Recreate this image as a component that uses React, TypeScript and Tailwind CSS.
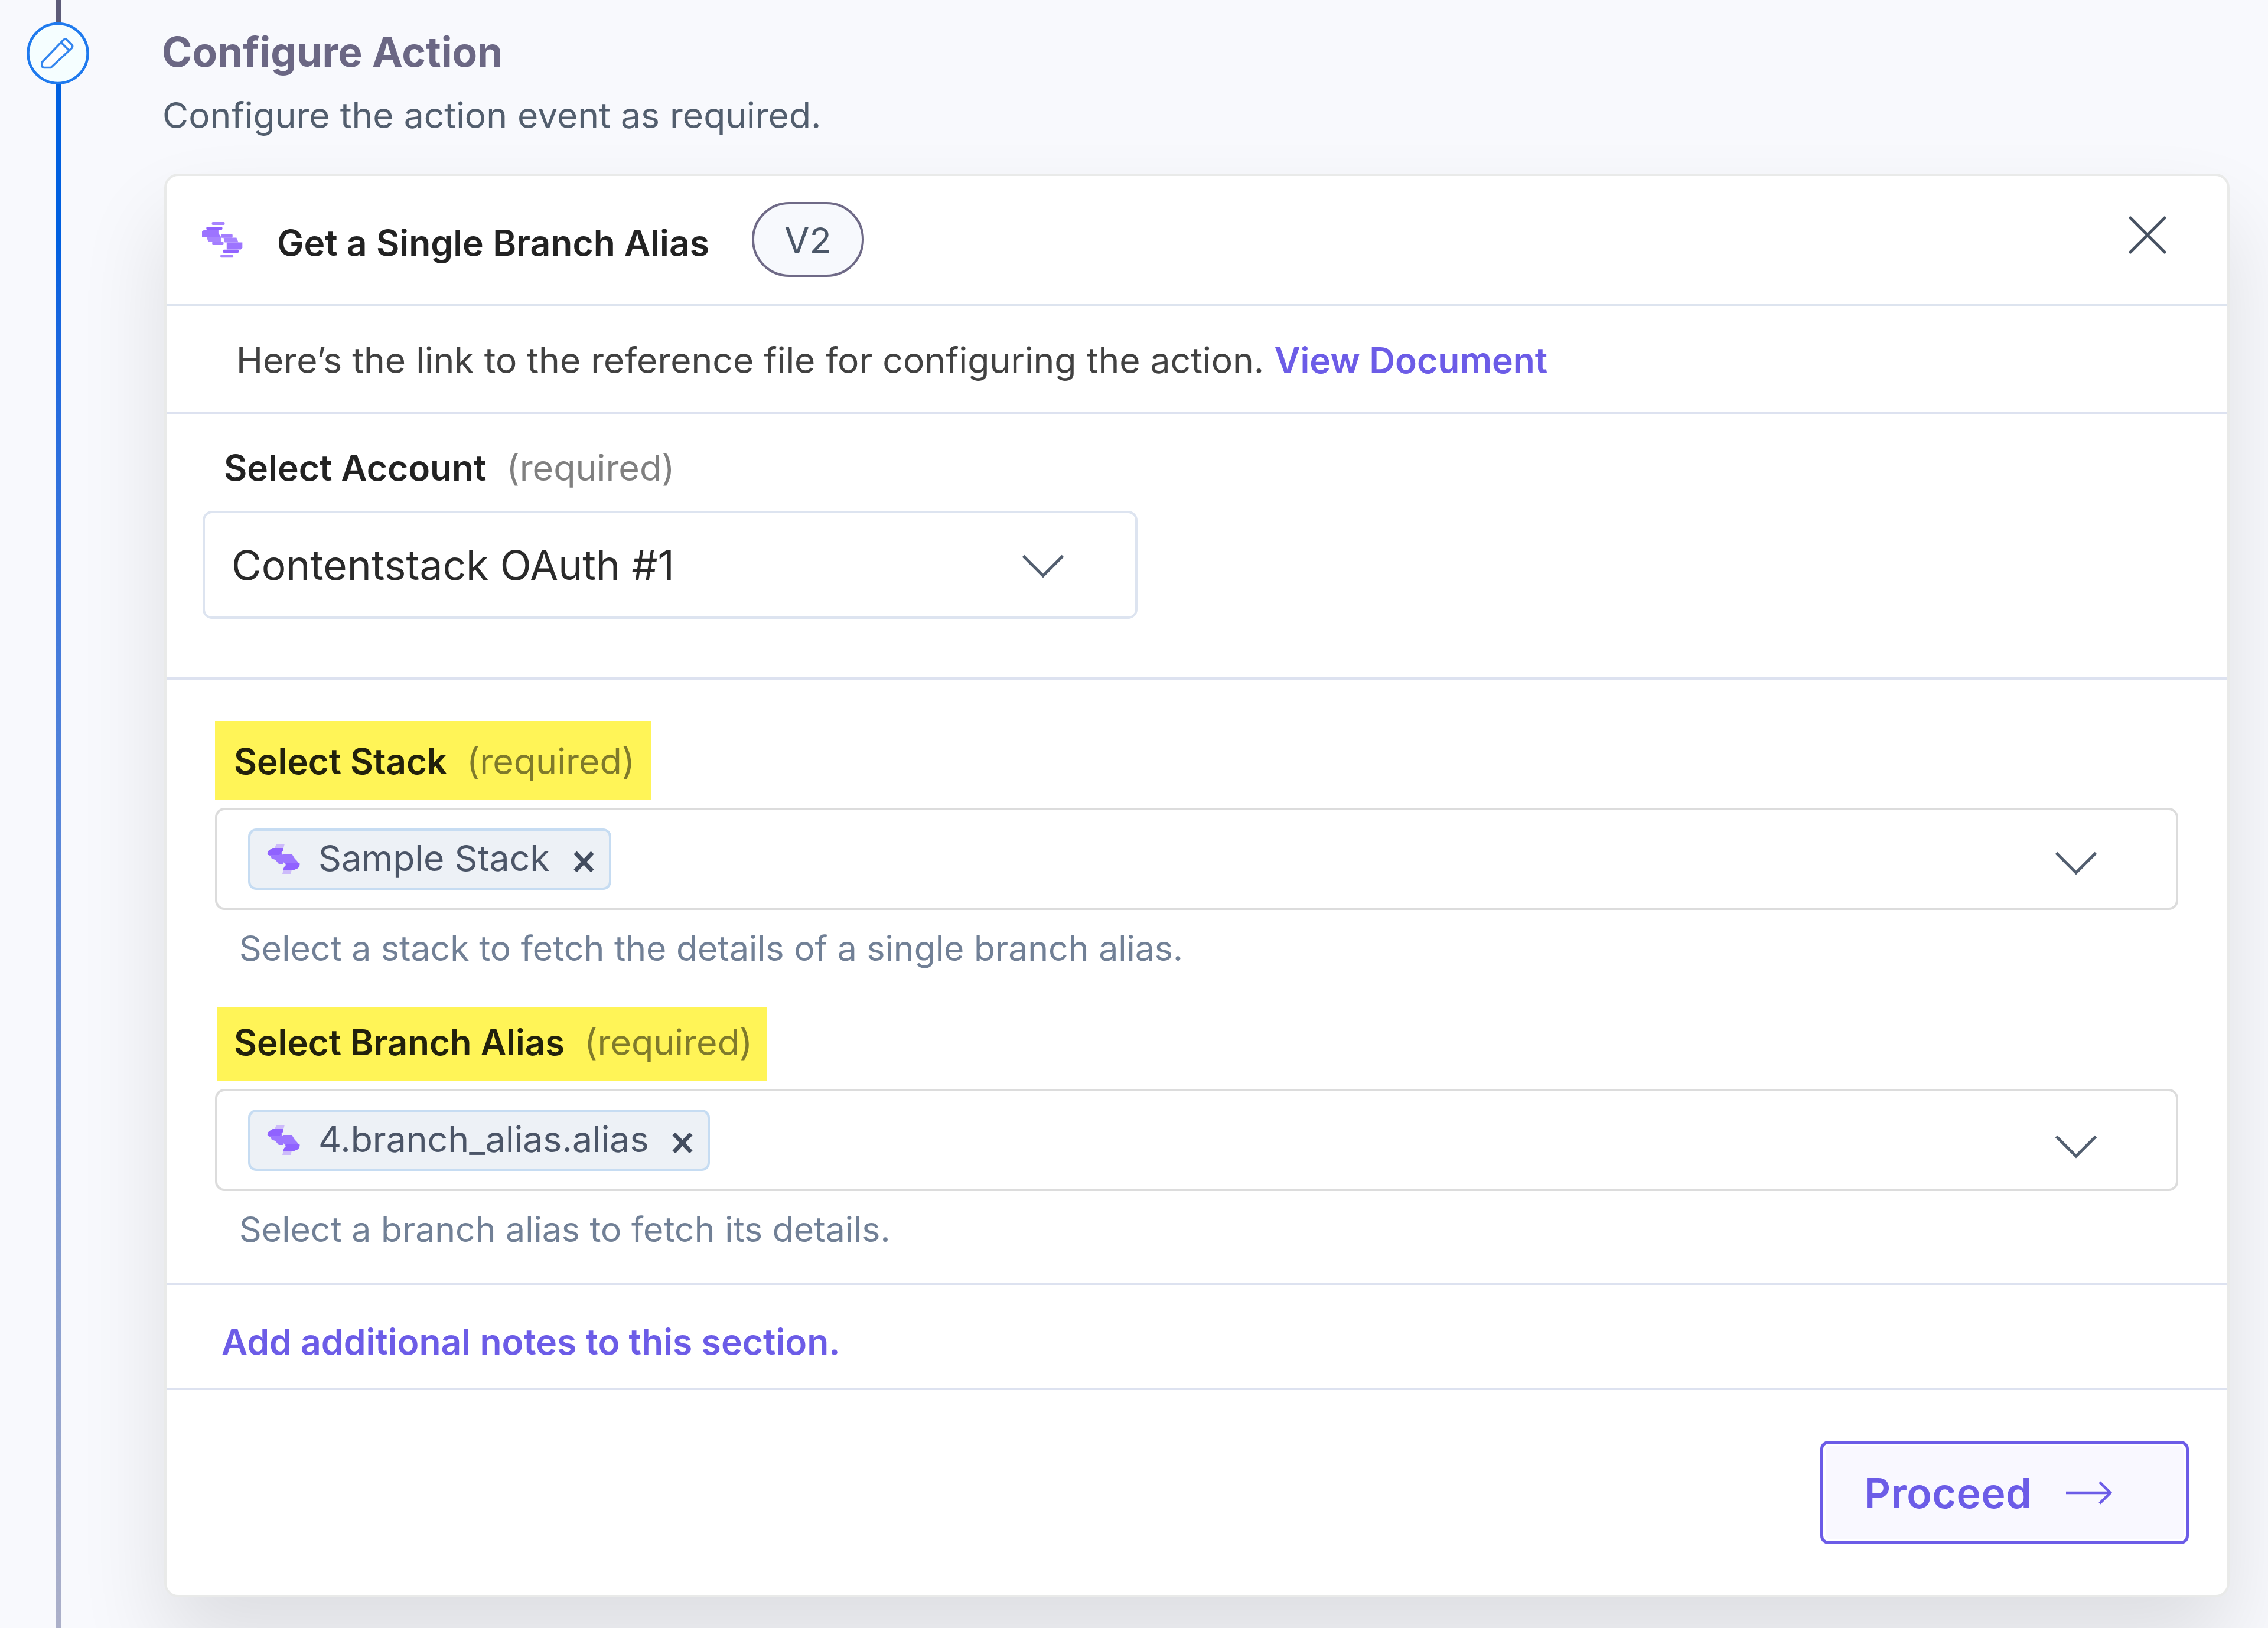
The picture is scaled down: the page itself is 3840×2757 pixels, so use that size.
import type { ReactNode } from "react";

type IconProps = {
  className?: string;
};

function StackLogo({ className }: IconProps) {
  return (
    <svg className={className} viewBox="0 0 212 190" fill="none">
      <rect x="52" y="3" width="66" height="15" rx="5" fill="#a884ff" />
      <rect x="24" y="27" width="82" height="16" rx="6" fill="#9163ff" />
      <path d="M10 45h76v16l12 17v27H56V105H38L26 80H2V52z" fill="#9d74ff" />
      <path d="M26 79h70v26H34z" fill="#a884ff" />
      <rect x="54" y="103" width="58" height="18" rx="5" fill="#a47dff" />
      <rect x="100" y="64" width="58" height="20" rx="5" fill="#a47dff" />
      <path d="M112 83h66l10 24h-70z" fill="#a884ff" />
      <path d="M128 107h80v28l-8 8h-72z" fill="#9d74ff" />
      <rect x="108" y="144" width="82" height="16" rx="6" fill="#9163ff" />
      <rect x="96" y="170" width="66" height="15" rx="5" fill="#a884ff" />
    </svg>
  );
}

// simplified mark used at tag size
function StackLogoSmall({ className }: IconProps) {
  return (
    <svg className={className} viewBox="0 0 56 53" fill="none">
      <path d="M16 1h14l-2 7H13z" fill="#cdbbfb" />
      <path d="M28 45h14l-2 7H26z" fill="#cdbbfb" />
      <path d="M10 8h18q0 5-4 8l4 5v14H20L14 28 8 26 6 22 1 19q-1-5 4-8z" fill="#9d76ff" />
      <path d="M10 8h18q0 5-4 8l-3 4H2q-3-5 3-9z" fill="#9062ff" />
      <path d="M28 18h14l5 8 3 3 5 6q1 5-4 8l-5 2H28q0-5 4-8l-4-5z" fill="#9d76ff" />
      <path d="M33 33h22q2 5-4 10l-5 2H28q0-5 5-8z" fill="#9062ff" />
    </svg>
  );
}

function ChevronIcon({ className }: IconProps) {
  return (
    <svg className={className} width="70" height="41" viewBox="0 0 70 41" fill="none">
      <path d="M1.5 3.5 35 37 68.5 3.5" stroke="#525e6f" strokeWidth="5" />
    </svg>
  );
}

function StepIcon() {
  return (
    <svg className="mr-[4px] shrink-0" width="108" height="106" viewBox="0 0 108 106" fill="none">
      <circle cx="54" cy="53.5" r="50.5" fill="#f5feff" stroke="#1f7aee" strokeWidth="4.5" />
      <path
        d="M27.5 68 63 31q3.500-3.500 7 0l7 7q3.500 3.500 0 7L42 77.500H31q-4 0-4-4z"
        fill="#fdfeff"
        stroke="#3386ef"
        strokeWidth="3.5"
        strokeLinejoin="round"
      />
      <path d="M60 35.5 72.5 48" stroke="#3386ef" strokeWidth="3.5" />
    </svg>
  );
}

function Tag({ children }: { children: ReactNode }) {
  return (
    <div className="flex h-[104px] items-center rounded-[14px] border-4 border-[#c6dcf2] bg-[#edf1f6] pr-[25px] pl-[28px]">
      <StackLogoSmall className="h-[53px] w-[56px]" />
      <span className="mb-[3px] ml-[31px] text-[60.7px] leading-[72px] text-[#4b5567]">{children}</span>
      <svg className="mt-[10px] ml-10" width="35" height="35" viewBox="0 0 35 35" fill="none">
        <path d="M3 2 32 33M32 2 3 33" stroke="#434d5f" strokeWidth="7" />
      </svg>
    </div>
  );
}

function FieldLabel({ label, className }: { label: string; className: string }) {
  return (
    <div className={`flex items-center bg-[#fff457] ${className}`}>
      <span className="text-[60px] leading-[72px] font-semibold text-[#22210c]">{label}</span>
      <span className="ml-[33px] text-[61px] leading-[72px] text-[#7f7a2b]">(required)</span>
    </div>
  );
}

export default function App() {
  return (
    <div className="flex h-[2757px] w-[3840px] overflow-hidden bg-[#f8f9fd] font-[Inter,sans-serif]">
      <div className="flex w-[199px] shrink-0 flex-col items-center">
        <div className="h-[37px] w-[9px] shrink-0 bg-[#5d5b78]" />
        <StepIcon />
        <div className="w-[9px] flex-1 bg-linear-to-b from-[#0060e0] from-10% to-[#acb0c9]" />
      </div>

      <div className="pt-[46px] pl-[75px]">
        <h2 className="text-[69.5px] leading-[84px] font-bold text-[#6b6784]">Configure Action</h2>
        <p className="mt-[29px] ml-px text-[60.6px] leading-[72px] text-[#525e6e]">
          Configure the action event as required.
        </p>

        <div className="mt-[63px] ml-1 h-[2411px] w-[3497px] rounded-[24px] border-4 border-[#e9eae9] bg-white shadow-[0_80px_150px_rgba(0,0,0,0.11)]">
          <div className="flex h-[221px] items-center border-b-4 border-[#dde4ef] pr-[102px] pl-[59px]">
            <StackLogo className="h-[63px] w-[71px]" />
            <h3 className="ml-[57px] pt-[8px] text-[60.6px] leading-[72px] font-semibold text-[#222222]">
              Get a Single Branch Alias
            </h3>
            <span className="mb-[3px] ml-[72px] flex h-[127px] w-[190px] items-center justify-center rounded-full border-4 border-[#6f6a87] bg-[#f7f9fd] pt-[3px] text-[61px] leading-[72px] text-[#4b5768]">
              V2
            </span>
            <svg className="mb-[17px] ml-auto" width="66" height="66" viewBox="0 0 66 66" fill="none">
              <path d="M4 4 62 62M62 4 4 62" stroke="#475262" strokeWidth="5" strokeLinecap="round" />
            </svg>
          </div>

          <div className="flex h-[182px] items-center border-b-4 border-[#dde2f0] pt-1 pl-[118px]">
            <p className="text-[60.6px] leading-[72px] text-[#414141]">
              Here’s the link to the reference file for configuring the action.{" "}
              <span className="font-semibold text-[#6c5ce7]">View Document</span>
            </p>
          </div>

          <div className="h-[450px] border-b-4 border-[#dde2f0] pt-[55px] pl-[61px]">
            <div className="flex pl-[36px]">
              <span className="text-[60.5px] leading-[72px] font-semibold text-[#222222]">Select Account</span>
              <span className="ml-[34px] text-[61px] leading-[72px] text-[#808080]">(required)</span>
            </div>
            <div className="mt-[37px] flex h-[183px] w-[1583px] items-center justify-between rounded-[16px] border-4 border-[#dde4f0] pr-[121px] pl-[45px]">
              <span className="pt-px text-[69.4px] leading-[84px] text-[#2a2a2a]">Contentstack OAuth #1</span>
              <ChevronIcon className="mt-1" />
            </div>
          </div>

          <div className="h-[1025px] border-b-4 border-[#dde2f0] pt-[70px] pl-[82px]">
            <FieldLabel label="Select Stack" className="h-[134px] w-[739px] pt-[2px] pl-[32px]" />
            <div className="mt-[13px] flex h-[173px] w-[3324px] items-center justify-between rounded-[16px] border-4 border-[#dcdcdc] pr-[134px] pl-[52px]">
              <Tag>Sample Stack</Tag>
              <ChevronIcon className="mt-[14px]" />
            </div>
            <p className="mt-[29px] ml-[41px] text-[58.92px] leading-[72px] text-[#718096]">
              Select a stack to fetch the details of a single branch alias.
            </p>

            <FieldLabel label="Select Branch Alias" className="mt-[63px] ml-[3px] h-[126px] w-[931px] pb-[6px] pl-[29px]" />
            <div className="mt-[13px] flex h-[173px] w-[3324px] items-center justify-between rounded-[16px] border-4 border-[#dcdcdc] pr-[134px] pl-[52px]">
              <Tag>4.branch_alias.alias</Tag>
              <ChevronIcon className="mt-[22px]" />
            </div>
            <p className="mt-[29px] ml-[41px] text-[58.92px] leading-[72px] text-[#718096]">
              Select a branch alias to fetch its details.
            </p>
          </div>

          <div className="flex h-[178px] items-center border-b-4 border-[#dde2f0] pt-[17px] pl-[93px]">
            <a className="text-[60.6px] leading-[72px] font-semibold text-[#6c5ce7]">
              Add additional notes to this section.
            </a>
          </div>

          <div className="flex justify-end pt-[86px] pr-[65px]">
            <button className="flex h-[175px] w-[624px] items-center rounded-[14px] border-[5px] border-[#6c5ce7] bg-[#f9f8ff] pl-[69px] text-[70px] leading-[84px] font-semibold tracking-[0.4px] text-[#6c5ce7] shadow-[inset_0_0_0_4px_#ffffff]">
              <span className="pt-[2px]">Proceed</span>
              <svg className="ml-[58px]" width="78" height="40" viewBox="0 0 78 40" fill="none">
                <path d="M0 20h74M57 2l18 18-18 18" stroke="#6c5ce7" strokeWidth="4.5" />
              </svg>
            </button>
          </div>
        </div>
      </div>
    </div>
  );
}
